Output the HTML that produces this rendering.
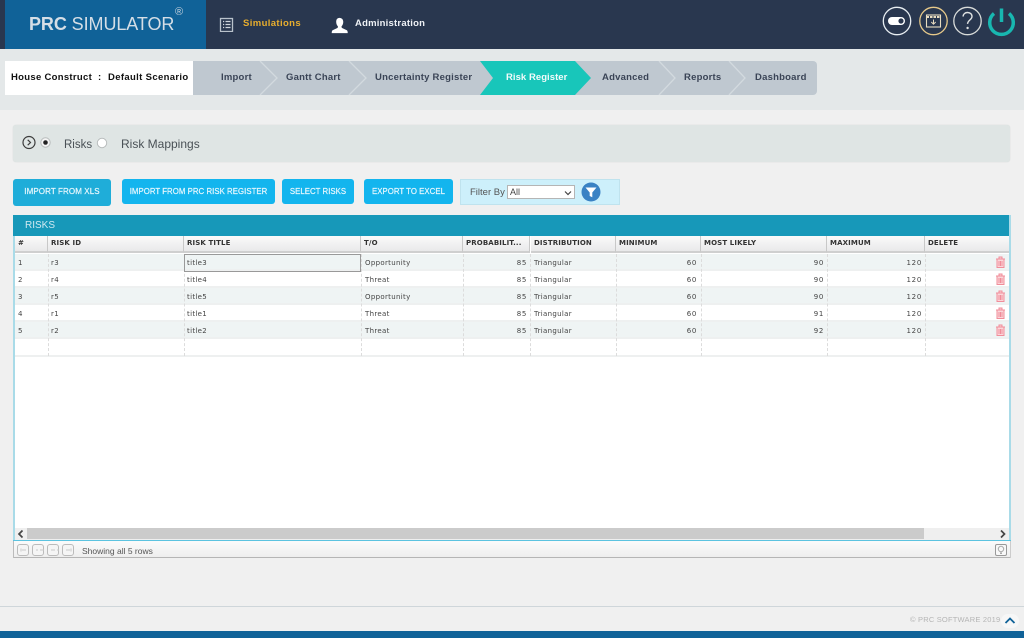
<!DOCTYPE html>
<html><head><meta charset="utf-8">
<style>
html,body{margin:0;padding:0}
body{width:1024px;height:638px;position:relative;overflow:hidden;background:#f0f0f0;font-family:"Liberation Sans",sans-serif}
.a{position:absolute;white-space:nowrap}
.btn{position:absolute;top:179px;height:25px;background:#13b5ee;border-radius:3px;color:#e8f7fd;font-size:7.8px;line-height:25px;text-align:center;letter-spacing:.05px;white-space:nowrap;-webkit-text-stroke:.2px #e8f7fd}
.st{position:absolute;top:73px;font-size:9.5px;line-height:10px;font-weight:bold;color:#3a4456;letter-spacing:.22px;white-space:nowrap}
.th{position:absolute;top:236px;height:15px;line-height:15px;font-family:"DejaVu Sans",sans-serif;font-weight:bold;font-size:7px;color:#333;letter-spacing:.12px;background:linear-gradient(#fafafa,#e9e9ea);border-right:1px solid #c8c8c8;border-bottom:2px solid #cfcfcf;padding-left:3px;white-space:nowrap;overflow:hidden}
.row{position:absolute;left:15px;width:994px;height:15px;border-bottom:2px solid #eef0f0}
.c{position:absolute;font-family:"DejaVu Sans",sans-serif;font-size:7px;color:#444;line-height:10px;letter-spacing:.32px;white-space:nowrap}
.r{text-align:right;letter-spacing:.7px}
.v{position:absolute;top:254px;height:102px;width:0;border-left:1px dashed #dcdcdc}
.pg{position:absolute;top:544px;width:10px;height:10px;border:1px solid #bbb;border-radius:3px;background:#f5f5f5}
</style></head><body>

<!-- header -->
<div class="a" style="left:0;top:0;width:1024px;height:49px;background:#29374f"></div>
<div class="a" style="left:5px;top:0;width:201px;height:49px;background:#106298"></div>
<div class="a" style="left:29px;top:13px;font-size:18px;line-height:22px;letter-spacing:-.08px;color:#d5dee6"><b>PRC</b> SIMULATOR</div>
<div class="a" style="left:175px;top:7px;font-size:11px;line-height:11px;color:#c5d3de">®</div>

<svg class="a" style="left:219px;top:17px" width="15" height="15" viewBox="0 0 15 15"><rect x="1.5" y="1.5" width="12" height="13" fill="none" stroke="#b9c2cb" stroke-width="1.3"/><path d="M4 4.500h1.200M6.500 4.500h5M4 7.500h1.200M6.500 7.500h5M4 10.500h1.200M6.500 10.500h5" stroke="#cfd5dc" stroke-width="1.200"/></svg>
<div class="a" style="left:243px;top:18px;font-size:9.5px;line-height:12px;font-weight:bold;color:#e8ae2e;letter-spacing:.38px">Simulations</div>
<svg class="a" style="left:331px;top:16.5px" width="17" height="17" viewBox="0 0 19 18"><path d="M9.500 0.500c2.700 0 4.200 2 4.200 4.600 0 2.200-1 4-2 5l.4 1.600 5.600 2.600c.7.4 1 1.500 1 3.200H.8c0-1.700.3-2.800 1-3.200l5.600-2.600.4-1.600c-1-1-2-2.800-2-5C5.800 2.500 6.800.5 9.500.5z" fill="#fff"/></svg>
<div class="a" style="left:355px;top:18px;font-size:9.5px;line-height:12px;font-weight:bold;color:#eef1f5;letter-spacing:.22px">Administration</div>

<svg class="a" style="left:880px;top:4px" width="144" height="34" viewBox="0 0 144 34">
<circle cx="17" cy="17" r="13.700" fill="none" stroke="#e8eef2" stroke-width="1.300"/>
<rect x="8" y="13" width="17" height="8" rx="4" fill="#fff"/><circle cx="21" cy="17" r="2.600" fill="#29374f"/>
<circle cx="53.500" cy="17" r="13.700" fill="none" stroke="#e6c98a" stroke-width="1.300"/>
<rect x="46.500" y="11" width="14" height="12" fill="none" stroke="#e8dcc0" stroke-width="1.100"/>
<path d="M46.500 13h14" stroke="#e8dcc0" stroke-width="2" stroke-dasharray="2.500 1"/>
<path d="M53.500 15.500v4.500M51.300 18l2.200 2.200L55.700 18" fill="none" stroke="#e8dcc0" stroke-width="1"/>
<circle cx="87.500" cy="17" r="13.700" fill="none" stroke="#d8dbd9" stroke-width="1.300"/>
<path d="M83 12.500c.3-2.600 2.200-4 4.500-4 2.600 0 4.500 1.600 4.500 3.900 0 3.500-4.400 3.800-4.400 7.500" fill="none" stroke="#dfe2e2" stroke-width="1.400"/>
<circle cx="87.600" cy="24" r="1.200" fill="#dfe2e2"/>
<path d="M114 9.500a11.800 11.800 0 1 0 15 0" fill="none" stroke="#18b7b0" stroke-width="3.500"/>
<path d="M121.500 4.500v13.500" stroke="#18b7b0" stroke-width="3.500"/>
</svg>

<!-- sub bar -->
<div class="a" style="left:0;top:49px;width:1024px;height:61px;background:#e4e8e9"></div>
<div class="a" style="left:5px;top:61px;width:812px;height:34px;background:#bfc8d0;border-radius:0 4px 4px 0"></div>
<div class="a" style="left:5px;top:61px;width:188px;height:34px;background:#fff"></div>
<div class="a" style="left:11px;top:73px;font-size:9.5px;line-height:10px;font-weight:bold;color:#111;letter-spacing:.3px">House Construct</div>
<div class="a" style="left:98px;top:73px;font-size:9.5px;line-height:10px;font-weight:bold;color:#111">:</div>
<div class="a" style="left:108px;top:73px;font-size:9.5px;line-height:10px;font-weight:bold;color:#111;letter-spacing:.35px">Default Scenario</div>
<svg class="a" style="left:193px;top:61px" width="624" height="34" viewBox="0 0 624 34">
<path d="M67 0l17 17-17 17M156 0l17 17-17 17M466 0l16 17-16 17M536 0l16 17-16 17" fill="none" stroke="#d3dadf" stroke-width="1.300"/>
<path d="M287 0H382l16 17-16 17H287l13-17z" fill="#18c6ba"/>
</svg>
<div class="st" style="left:221px">Import</div>
<div class="st" style="left:286px">Gantt Chart</div>
<div class="st" style="left:375px">Uncertainty Register</div>
<div class="st" style="left:506px;color:#f2fbfa;letter-spacing:.05px">Risk Register</div>
<div class="st" style="left:602px">Advanced</div>
<div class="st" style="left:684px">Reports</div>
<div class="st" style="left:755px">Dashboard</div>

<!-- radio panel -->
<div class="a" style="left:13px;top:125px;width:997px;height:37px;background:#dfe5e4;border-radius:3px;box-shadow:0 0 1px #c9cfce"></div>
<svg class="a" style="left:21px;top:134px" width="32" height="17" viewBox="0 0 32 17">
<circle cx="8" cy="8.500" r="6" fill="none" stroke="#3c3c3c" stroke-width="1.200"/>
<path d="M6.700 5.800l2.800 2.700-2.800 2.700" fill="none" stroke="#3c3c3c" stroke-width="1.200"/>
<circle cx="24.500" cy="8.500" r="4.700" fill="#f4f4f4" stroke="#b8bcbc"/><circle cx="24.500" cy="8.500" r="2.300" fill="#222"/>
</svg>
<div class="a" style="left:64px;top:138px;font-size:11.5px;line-height:14px;color:#4a5156">Risks</div>
<svg class="a" style="left:96px;top:137px" width="12" height="12"><circle cx="6" cy="6" r="4.700" fill="#fff" stroke="#b8bcbc"/></svg>
<div class="a" style="left:121px;top:137px;font-size:12px;line-height:14px;color:#4a5156">Risk Mappings</div>

<!-- buttons -->
<div class="btn" style="left:13px;width:98px;height:27px;line-height:26px;background:#1fadd9;font-size:8px;letter-spacing:.1px">IMPORT FROM XLS</div>
<div class="btn" style="left:122px;width:153px">IMPORT FROM PRC RISK REGISTER</div>
<div class="btn" style="left:282px;width:72px">SELECT RISKS</div>
<div class="btn" style="left:364px;width:89px">EXPORT TO EXCEL</div>
<div class="a" style="left:460px;top:179px;width:158px;height:24px;background:#cdf0fb;border:1px solid #bfe3ee"></div>
<div class="a" style="left:470px;top:187px;font-size:9.5px;line-height:12px;color:#555">Filter By</div>
<div class="a" style="left:507px;top:185px;width:66px;height:12px;background:#fff;border:1px solid #b5b5b5;font-size:9px;line-height:12px;color:#444;text-indent:2px">All</div>
<svg class="a" style="left:564px;top:190px" width="8" height="6"><path d="M1 1.500l3 3 3-3" fill="none" stroke="#444" stroke-width="1.200"/></svg>
<svg class="a" style="left:581px;top:182px" width="20" height="20" viewBox="0 0 20 20"><circle cx="10" cy="10" r="9.500" fill="#3a82c4"/><path d="M4.500 5.500h11l-4.200 5v4.800l-2.600-1.300v-3.500z" fill="#fff"/></svg>

<!-- grid -->
<div class="a" style="left:13px;top:215px;width:998px;height:343px;background:#fff"></div>
<div class="a" style="left:13px;top:215px;width:997px;height:21px;background:#1798b9"></div>
<div class="a" style="left:25px;top:220px;font-size:10px;line-height:12px;color:#cfe9f1">RISKS</div>
<div class="a" style="left:13px;top:236px;width:2px;height:305px;background:#a9dbe8"></div>
<div class="a" style="left:1009px;top:215px;width:2px;height:326px;background:#a9dbe8"></div>

<div class="th" style="left:15px;width:29px">#</div>
<div class="th" style="left:48px;width:132px">RISK ID</div>
<div class="th" style="left:184px;width:173px">RISK TITLE</div>
<div class="th" style="left:361px;width:98px">T/O</div>
<div class="th" style="left:463px;width:63px">PROBABILIT...</div>
<div class="th" style="left:531px;width:81px">DISTRIBUTION</div>
<div class="th" style="left:616px;width:81px">MINIMUM</div>
<div class="th" style="left:701px;width:122px">MOST LIKELY</div>
<div class="th" style="left:827px;width:94px">MAXIMUM</div>
<div class="th" style="left:925px;width:81px;border-right:0">DELETE</div>

<div class="row" style="top:254px;background:#eff4f4"></div>
<div class="row" style="top:271px;background:#fff"></div>
<div class="row" style="top:288px;background:#eff4f4"></div>
<div class="row" style="top:305px;background:#fff"></div>
<div class="row" style="top:322px;background:#eff4f4"></div>
<div class="row" style="top:339px;background:#fff;height:16px"></div>

<div class="v" style="left:48px"></div><div class="v" style="left:184px"></div><div class="v" style="left:361px"></div><div class="v" style="left:463px"></div><div class="v" style="left:530px"></div><div class="v" style="left:616px"></div><div class="v" style="left:701px"></div><div class="v" style="left:827px"></div><div class="v" style="left:925px"></div>

<div class="a" style="left:184px;top:254px;width:175px;height:16px;border:1px solid #999"></div>

<div class="c" style="left:18px;top:258px">1</div><div class="c" style="left:51px;top:258px">r3</div><div class="c" style="left:187px;top:258px">title3</div><div class="c" style="left:365px;top:258px">Opportunity</div><div class="c r" style="left:463px;width:64px;top:258px">85</div><div class="c" style="left:534px;top:258px">Triangular</div><div class="c r" style="left:616px;width:81px;top:258px">60</div><div class="c r" style="left:701px;width:123px;top:258px">90</div><div class="c r" style="left:827px;width:95px;top:258px">120</div>
<div class="c" style="left:18px;top:275px">2</div><div class="c" style="left:51px;top:275px">r4</div><div class="c" style="left:187px;top:275px">title4</div><div class="c" style="left:365px;top:275px">Threat</div><div class="c r" style="left:463px;width:64px;top:275px">85</div><div class="c" style="left:534px;top:275px">Triangular</div><div class="c r" style="left:616px;width:81px;top:275px">60</div><div class="c r" style="left:701px;width:123px;top:275px">90</div><div class="c r" style="left:827px;width:95px;top:275px">120</div>
<div class="c" style="left:18px;top:292px">3</div><div class="c" style="left:51px;top:292px">r5</div><div class="c" style="left:187px;top:292px">title5</div><div class="c" style="left:365px;top:292px">Opportunity</div><div class="c r" style="left:463px;width:64px;top:292px">85</div><div class="c" style="left:534px;top:292px">Triangular</div><div class="c r" style="left:616px;width:81px;top:292px">60</div><div class="c r" style="left:701px;width:123px;top:292px">90</div><div class="c r" style="left:827px;width:95px;top:292px">120</div>
<div class="c" style="left:18px;top:309px">4</div><div class="c" style="left:51px;top:309px">r1</div><div class="c" style="left:187px;top:309px">title1</div><div class="c" style="left:365px;top:309px">Threat</div><div class="c r" style="left:463px;width:64px;top:309px">85</div><div class="c" style="left:534px;top:309px">Triangular</div><div class="c r" style="left:616px;width:81px;top:309px">60</div><div class="c r" style="left:701px;width:123px;top:309px">91</div><div class="c r" style="left:827px;width:95px;top:309px">120</div>
<div class="c" style="left:18px;top:326px">5</div><div class="c" style="left:51px;top:326px">r2</div><div class="c" style="left:187px;top:326px">title2</div><div class="c" style="left:365px;top:326px">Threat</div><div class="c r" style="left:463px;width:64px;top:326px">85</div><div class="c" style="left:534px;top:326px">Triangular</div><div class="c r" style="left:616px;width:81px;top:326px">60</div><div class="c r" style="left:701px;width:123px;top:326px">92</div><div class="c r" style="left:827px;width:95px;top:326px">120</div>

<svg class="a" style="left:995px;top:256px" width="11" height="90" viewBox="0 0 11 90">
<g fill="#fbd6da" stroke="#f08d9a" stroke-width="1">
<g><path d="M1 3h9M4 3V1h3v2M2 3v8.500h7V3"/><path d="M4 5v5M5.500 5v5M7 5v5" fill="none"/></g>
<g transform="translate(0 17)"><path d="M1 3h9M4 3V1h3v2M2 3v8.500h7V3"/><path d="M4 5v5M5.500 5v5M7 5v5" fill="none"/></g>
<g transform="translate(0 34)"><path d="M1 3h9M4 3V1h3v2M2 3v8.500h7V3"/><path d="M4 5v5M5.500 5v5M7 5v5" fill="none"/></g>
<g transform="translate(0 51)"><path d="M1 3h9M4 3V1h3v2M2 3v8.500h7V3"/><path d="M4 5v5M5.500 5v5M7 5v5" fill="none"/></g>
<g transform="translate(0 68)"><path d="M1 3h9M4 3V1h3v2M2 3v8.500h7V3"/><path d="M4 5v5M5.500 5v5M7 5v5" fill="none"/></g>
</g></svg>

<!-- scrollbar -->
<div class="a" style="left:15px;top:528px;width:994px;height:12px;background:#efefef"></div>
<div class="a" style="left:27px;top:528px;width:897px;height:11px;background:#cbcbcb"></div>
<svg class="a" style="left:16px;top:529px" width="992" height="10" viewBox="0 0 992 10"><path d="M6.500 1.500L3 5l3.500 3.500M985 1.500l3.500 3.500-3.500 3.500" fill="none" stroke="#444" stroke-width="1.700"/></svg>
<div class="a" style="left:13px;top:540px;width:998px;height:1px;background:#5cc3e0"></div>

<!-- pager -->
<div class="a" style="left:13px;top:541px;width:998px;height:16px;background:linear-gradient(#fbfbfb,#eeeeee);border-bottom:1px solid #b5b5b5"></div>
<div class="a" style="left:13px;top:541px;width:1px;height:17px;background:#bbb"></div>
<div class="a" style="left:1010px;top:541px;width:1px;height:17px;background:#ccc"></div>
<div class="pg" style="left:17px"></div><div class="pg" style="left:32px"></div><div class="pg" style="left:47px"></div><div class="pg" style="left:62px"></div>
<svg class="a" style="left:17px;top:544px" width="60" height="13" viewBox="0 0 60 13"><path d="M4 4.500v3M5 6h4M19 6h2M23 6h4M34 6h4M40 6h2M49 6h4M54 4.500v3" stroke="#c9c9c9" stroke-width="1" fill="none"/></svg>
<div class="a" style="left:82px;top:546px;font-size:8.5px;line-height:11px;color:#555">Showing all 5 rows</div>
<div class="a" style="left:995px;top:544px;width:10px;height:10px;border:1px solid #999;border-radius:2px;background:#f8f8f8"></div>
<svg class="a" style="left:996px;top:545px" width="10" height="11"><circle cx="5" cy="4" r="2.700" fill="none" stroke="#aaa"/><path d="M4 7.500h2v1.500H4z" fill="#aaa"/></svg>

<!-- footer -->
<div class="a" style="left:0;top:606px;width:1024px;height:1px;background:#cfd6da"></div>
<div class="a" style="left:910px;top:615px;font-size:7.5px;line-height:10px;color:#b5b5b5;letter-spacing:.2px">© PRC SOFTWARE 2019</div>
<div class="a" style="left:1001px;top:614px;width:18px;height:14px;border-radius:9px;background:#f7f7f7"></div>
<svg class="a" style="left:1004px;top:616px" width="12" height="9"><path d="M1.500 7L6 2.500 10.500 7" fill="none" stroke="#106298" stroke-width="1.800"/></svg>
<div class="a" style="left:0;top:631px;width:1024px;height:7px;background:#106298"></div>
</body></html>
